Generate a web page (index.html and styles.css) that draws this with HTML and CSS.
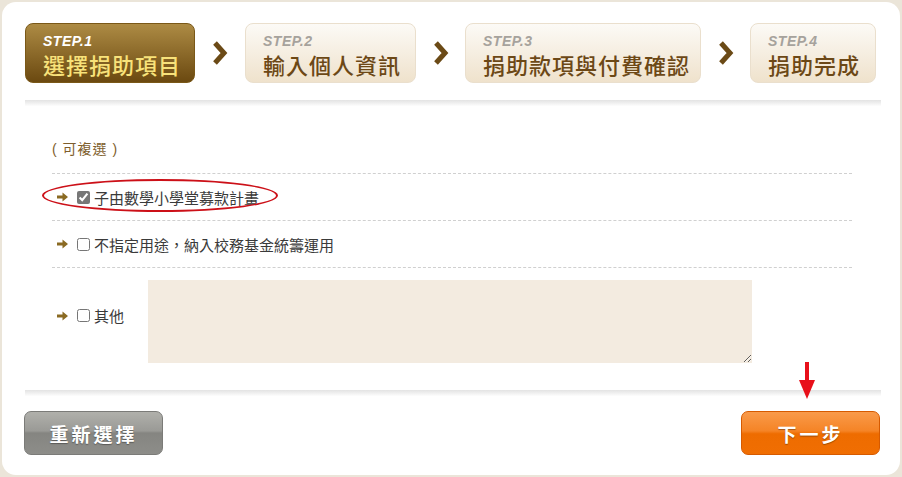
FILE: index.html
```html
<!DOCTYPE html>
<html lang="zh-Hant">
  <head>
    <meta charset="UTF-8" />
    <title>捐助項目</title>
    <link rel="stylesheet" href="styles.css">
  </head>
  <body>
    <div class="panel">
      <div class="steps">
        <div class="step active">
          <span class="step-no">STEP.1</span>
          <span class="step-name">選擇捐助項目</span>
        </div>
        <div class="chevron wide"><svg width="16" height="26" viewBox="0 0 16 26"><polyline points="3,3 12,13 3,23" fill="none" stroke="#6b4a16" stroke-width="5" /></svg></div>
        <div class="step step2">
          <span class="step-no">STEP.2</span>
          <span class="step-name">輸入個人資訊</span>
        </div>
        <div class="chevron"><svg width="16" height="26" viewBox="0 0 16 26"><polyline points="3,3 12,13 3,23" fill="none" stroke="#6b4a16" stroke-width="5" /></svg></div>
        <div class="step step3">
          <span class="step-no">STEP.3</span>
          <span class="step-name">捐助款項與付費確認</span>
        </div>
        <div class="chevron"><svg width="16" height="26" viewBox="0 0 16 26"><polyline points="3,3 12,13 3,23" fill="none" stroke="#6b4a16" stroke-width="5" /></svg></div>
        <div class="step step4">
          <span class="step-no">STEP.4</span>
          <span class="step-name">捐助完成</span>
        </div>
      </div>

      <div class="sep"></div>

      <div class="form">
        <p class="hint">( 可複選 )</p>
        <div class="row">
          <span class="mark"></span>
          <svg class="arrow" width="11" height="10" viewBox="0 0 11 10"><path d="M0 3.5h5.5V0.5l5.5 4.5-5.5 4.5V6.5H0z" fill="#8a6a22" /></svg>
          <input type="checkbox" checked />
          <label>子由數學小學堂募款計畫</label>
        </div>
        <div class="row">
          <svg class="arrow" width="11" height="10" viewBox="0 0 11 10"><path d="M0 3.5h5.5V0.5l5.5 4.5-5.5 4.5V6.5H0z" fill="#8a6a22" /></svg>
          <input type="checkbox" />
          <label>不指定用途，納入校務基金統籌運用</label>
        </div>
        <div class="row other">
          <svg class="arrow" width="11" height="10" viewBox="0 0 11 10"><path d="M0 3.5h5.5V0.5l5.5 4.5-5.5 4.5V6.5H0z" fill="#8a6a22" /></svg>
          <input type="checkbox" />
          <label class="other-label">其他</label>
          <textarea></textarea>
        </div>
      </div>

      <div class="sep bottom-sep"></div>

      <div class="actions">
        <button class="btn gray">重新選擇</button>
        <button class="btn orange">下一步</button>
        <svg class="pointer" width="16" height="38" viewBox="0 0 16 38"><rect x="6" y="0" width="4" height="24" fill="#e8101a" /><polygon points="0,18 16,18 8,37" fill="#e8101a" /></svg>
      </div>
    </div>
  </body>
</html>
```

FILE: styles.css
```css
html,
body {
  margin: 0;
  padding: 0;
  height: 100%;
}

body {
  background-color: #ebe5d9;
  font-family: "Liberation Sans", "Noto Sans CJK TC", sans-serif;
  color: #333;
}

.panel {
  box-sizing: border-box;
  position: relative;
  margin: 2px;
  height: 473px;
  background-color: #fff;
  border-radius: 14px;
  padding: 21px 20px 0 23px;
}

/* steps */
.steps {
  display: flex;
  align-items: center;
  height: 60px;
}

.step {
  box-sizing: border-box;
  flex-shrink: 0;
  height: 60px;
  width: 171px;
  border-radius: 8px;
  border: 1px solid #eadfcd;
  background: linear-gradient(#fcfaf6, #efe2cc);
  padding: 10px 0 0 17px;
  display: flex;
  flex-flow: column;
}

.step.active {
  width: 170px;
  border-color: #7a5818;
  background: linear-gradient(#ad8b44, #6b4910);
}

.step3 {
  width: 236px;
}

.step4 {
  width: 126px;
}

.step-no {
  font-family: "Liberation Sans", Arial, sans-serif;
  font-size: 14px;
  font-weight: bold;
  font-style: italic;
  letter-spacing: 0.5px;
  line-height: 14px;
  color: #a6a29c;
}

.step.active .step-no {
  color: #fff;
}

.step-name {
  margin-top: 3px;
  font-family: "Noto Sans CJK TC", sans-serif;
  font-size: 22px;
  font-weight: 500;
  line-height: 26px;
  letter-spacing: 1px;
  color: #6c4816;
}

.step.active .step-name {
  color: #f8e27a;
}

.chevron {
  flex-shrink: 0;
  width: 49px;
  display: flex;
  justify-content: center;
  align-items: center;
}

.chevron.wide {
  width: 50px;
}

/* separators */
.sep {
  height: 6px;
  margin-top: 17px;
  background: linear-gradient(#e3e3e3, #fdfdfd);
  width: 856px;
}

.bottom-sep {
  margin-top: 27px;
}

/* form */
.form {
  margin-left: 27px;
  width: 800px;
}

.hint {
  margin: 0;
  height: 67px;
  box-sizing: border-box;
  padding-top: 33px;
  font-size: 14px;
  line-height: 20px;
  letter-spacing: 1px;
  color: #7e5e2c;
}

.row {
  position: relative;
  box-sizing: border-box;
  height: 47px;
  border-top: 1px dashed #d0d0d0;
  display: flex;
  align-items: center;
  padding-left: 5px;
  font-size: 15px;
}

.row .arrow {
  flex-shrink: 0;
}

.row input {
  margin: 0 0 0 9px;
  width: 13px;
  height: 13px;
  accent-color: #777;
}

.row label {
  margin-left: 4px;
  font-family: "Noto Sans CJK TC", sans-serif;
  color: #3a3a3a;
}

.row.other {
  height: 96px;
}

.other-label {
  width: 54px;
  flex-shrink: 0;
}

.row textarea {
  box-sizing: border-box;
  width: 604px;
  height: 83px;
  margin-top: 12px;
  border: none;
  background-color: #f3ebe0;
  align-self: flex-start;
}

.mark {
  position: absolute;
  left: -10px;
  top: 5px;
  width: 232px;
  height: 29px;
  border: 2px solid #cc1018;
  border-radius: 50%;
}

/* buttons */
.actions {
  position: relative;
  display: flex;
  justify-content: space-between;
  width: 856px;
  margin-top: 15px;
  margin-left: -1px;
}

.btn {
  width: 139px;
  height: 44px;
  border-radius: 7px;
  font-family: "Noto Sans CJK TC", sans-serif;
  font-size: 19px;
  font-weight: bold;
  letter-spacing: 3px;
  color: #fff;
  text-shadow: 0 1px 1px rgba(0, 0, 0, 0.35);
  cursor: pointer;
}

.btn.gray {
  border: 1px solid #7b7b78;
  background: linear-gradient(#b0b0ab 0%, #9a9a96 45%, #858581 50%, #8d8d89 100%);
}

.btn.orange {
  border: 1px solid #d65a00;
  background: linear-gradient(#f99a4a 0%, #f58426 45%, #ee6c00 52%, #f06e02 100%);
}

.pointer {
  position: absolute;
  right: 65px;
  top: -49px;
}
```
